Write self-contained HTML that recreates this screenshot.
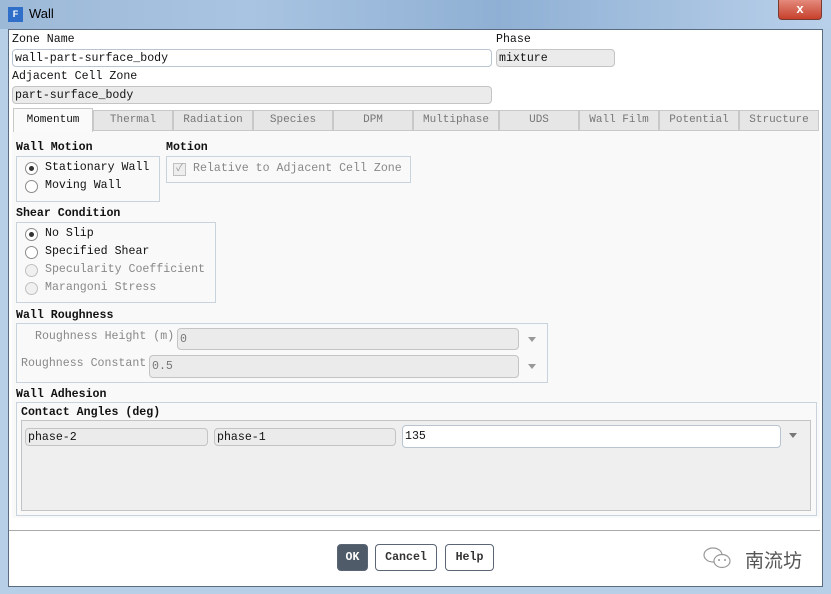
<!DOCTYPE html>
<html><head><meta charset="utf-8"><style>
*{box-sizing:border-box;margin:0;padding:0}
body{width:831px;height:594px;overflow:hidden;position:relative;background:#b8cfe8;font-family:"Liberation Mono","Noto Sans CJK SC",monospace;font-size:11.6px;color:#111}
.a{position:absolute;white-space:nowrap}
.title{left:0;top:0;width:831px;height:29px;background:linear-gradient(90deg,#9db9d8,#a9c4e2 30%,#8fb0d4 60%,#b9d0ea);}
.client{left:8px;top:29px;width:815px;height:558px;background:#fff;border:1px solid #5a6b80}
.in{border:1px solid #b8c4d0;border-radius:4px;background:#fff;height:18px;padding:1px 2px;line-height:15px}
.g{background:#ebebeb;border-color:#c4c4c4}
.tab{top:110px;height:21px;background:#e6e6e6;border:1px solid #c8c8c8;color:#777;text-align:center;line-height:19px;font-size:11px}
.box{border:1px solid #c9d3de}
.b{font-weight:bold}
.r{width:13px;height:13px;border:1px solid #8a8a8a;border-radius:50%;background:#fff}
.r.on::after{content:"";position:absolute;left:3px;top:3px;width:5px;height:5px;border-radius:50%;background:#333}
.r.d{border-color:#c0c0c0;background:#f0f0f0}
.dim{color:#888}
.arr{width:0;height:0;border-left:4px solid transparent;border-right:4px solid transparent;border-top:5px solid #999}
.btn{top:544px;height:27px;border:1px solid #5a6575;border-radius:4px;background:#fff;font-weight:bold;text-align:center;line-height:25px;color:#333}
</style></head><body>
<div class="a title"></div>
<div class="a" style="left:8px;top:7px;width:15px;height:15px;background:#2f6fc9;color:#fff;font:bold 9px 'Liberation Sans',sans-serif;text-align:center;line-height:15px">F</div>
<div class="a" style="left:29px;top:6px;font:13px 'Liberation Sans',sans-serif;color:#000">Wall</div>
<div class="a" style="left:778px;top:0;width:44px;height:20px;background:linear-gradient(#e48a7c,#c6402c);border:1px solid #7a3a30;border-top:none;border-radius:0 0 4px 4px;color:#fff;font:bold 13px 'Liberation Sans',sans-serif;text-align:center;line-height:18px">x</div>
<div class="a client"></div>

<div class="a" style="left:12px;top:33px">Zone Name</div>
<div class="a in" style="left:12px;top:49px;width:480px">wall-part-surface_body</div>
<div class="a" style="left:496px;top:33px">Phase</div>
<div class="a in g" style="left:496px;top:49px;width:119px">mixture</div>
<div class="a" style="left:12px;top:70px">Adjacent Cell Zone</div>
<div class="a in g" style="left:12px;top:86px;width:480px">part-surface_body</div>

<div class="a" style="left:12px;top:131px;width:808px;height:387px;background:#f9f9f9"></div>
<div class="a tab" style="left:13px;top:108px;height:24px;width:80px;background:#fafafa;color:#111;border-bottom:none;line-height:22px">Momentum</div>
<div class="a tab" style="left:93px;width:80px">Thermal</div>
<div class="a tab" style="left:173px;width:80px">Radiation</div>
<div class="a tab" style="left:253px;width:80px">Species</div>
<div class="a tab" style="left:333px;width:80px">DPM</div>
<div class="a tab" style="left:413px;width:86px">Multiphase</div>
<div class="a tab" style="left:499px;width:80px">UDS</div>
<div class="a tab" style="left:579px;width:80px">Wall Film</div>
<div class="a tab" style="left:659px;width:80px">Potential</div>
<div class="a tab" style="left:739px;width:80px">Structure</div>

<div class="a b" style="left:16px;top:141px">Wall Motion</div>
<div class="a box" style="left:16px;top:156px;width:144px;height:46px"></div>
<div class="a r on" style="left:25px;top:162px"></div><div class="a" style="left:45px;top:161px">Stationary Wall</div>
<div class="a r" style="left:25px;top:180px"></div><div class="a" style="left:45px;top:179px">Moving Wall</div>
<div class="a b" style="left:166px;top:141px">Motion</div>
<div class="a box" style="left:166px;top:156px;width:245px;height:27px"></div>
<div class="a" style="left:173px;top:163px;width:13px;height:13px;border:1px solid #c0c0c0;background:#eee;color:#999;font-size:10px;line-height:11px;text-align:center">✓</div>
<div class="a dim" style="left:193px;top:162px">Relative to Adjacent Cell Zone</div>

<div class="a b" style="left:16px;top:207px">Shear Condition</div>
<div class="a box" style="left:16px;top:222px;width:200px;height:81px"></div>
<div class="a r on" style="left:25px;top:228px"></div><div class="a" style="left:45px;top:227px">No Slip</div>
<div class="a r" style="left:25px;top:246px"></div><div class="a" style="left:45px;top:245px">Specified Shear</div>
<div class="a r d" style="left:25px;top:264px"></div><div class="a dim" style="left:45px;top:263px">Specularity Coefficient</div>
<div class="a r d" style="left:25px;top:282px"></div><div class="a dim" style="left:45px;top:281px">Marangoni Stress</div>

<div class="a b" style="left:16px;top:309px">Wall Roughness</div>
<div class="a box" style="left:16px;top:323px;width:532px;height:60px"></div>
<div class="a dim" style="left:35px;top:330px">Roughness Height (m)</div>
<div class="a in g" style="left:177px;top:328px;width:342px;height:22px;line-height:19px;color:#777">0</div>
<div class="a arr" style="left:528px;top:337px"></div>
<div class="a dim" style="left:21px;top:357px">Roughness Constant</div>
<div class="a in g" style="left:149px;top:355px;width:370px;height:23px;line-height:20px;color:#777">0.5</div>
<div class="a arr" style="left:528px;top:364px"></div>

<div class="a b" style="left:16px;top:388px">Wall Adhesion</div>
<div class="a box" style="left:16px;top:402px;width:801px;height:114px"></div>
<div class="a b" style="left:21px;top:406px;font-weight:bold">Contact Angles (deg)</div>
<div class="a" style="left:21px;top:420px;width:790px;height:91px;background:#efefef;border:1px solid #c4c4c4"></div>
<div class="a in g" style="left:25px;top:428px;width:183px;line-height:15px">phase-2</div>
<div class="a in g" style="left:214px;top:428px;width:182px">phase-1</div>
<div class="a in" style="left:402px;top:425px;width:379px;height:23px;line-height:19px">135</div>
<div class="a arr" style="left:789px;top:433px;border-top-color:#777"></div>

<div class="a" style="left:9px;top:530px;width:811px;height:1px;background:#aaa"></div>
<div class="a btn" style="left:337px;width:31px;background:#4f5b68;color:#fff">OK</div>
<div class="a btn" style="left:375px;width:62px">Cancel</div>
<div class="a btn" style="left:445px;width:49px">Help</div>
<div class="a" style="left:702px;top:546px;width:32px;height:24px">
<svg width="32" height="24"><ellipse cx="11" cy="9" rx="9" ry="7" fill="none" stroke="#999" stroke-width="1.2"/><ellipse cx="20" cy="15" rx="8" ry="6.5" fill="#fff" stroke="#999" stroke-width="1.2"/><circle cx="17" cy="14" r="1" fill="#999"/><circle cx="23" cy="14" r="1" fill="#999"/></svg></div>
<div class="a" style="left:745px;top:546px;font:19px 'Noto Sans CJK SC',sans-serif;color:#555">南流坊</div>
</body></html>
